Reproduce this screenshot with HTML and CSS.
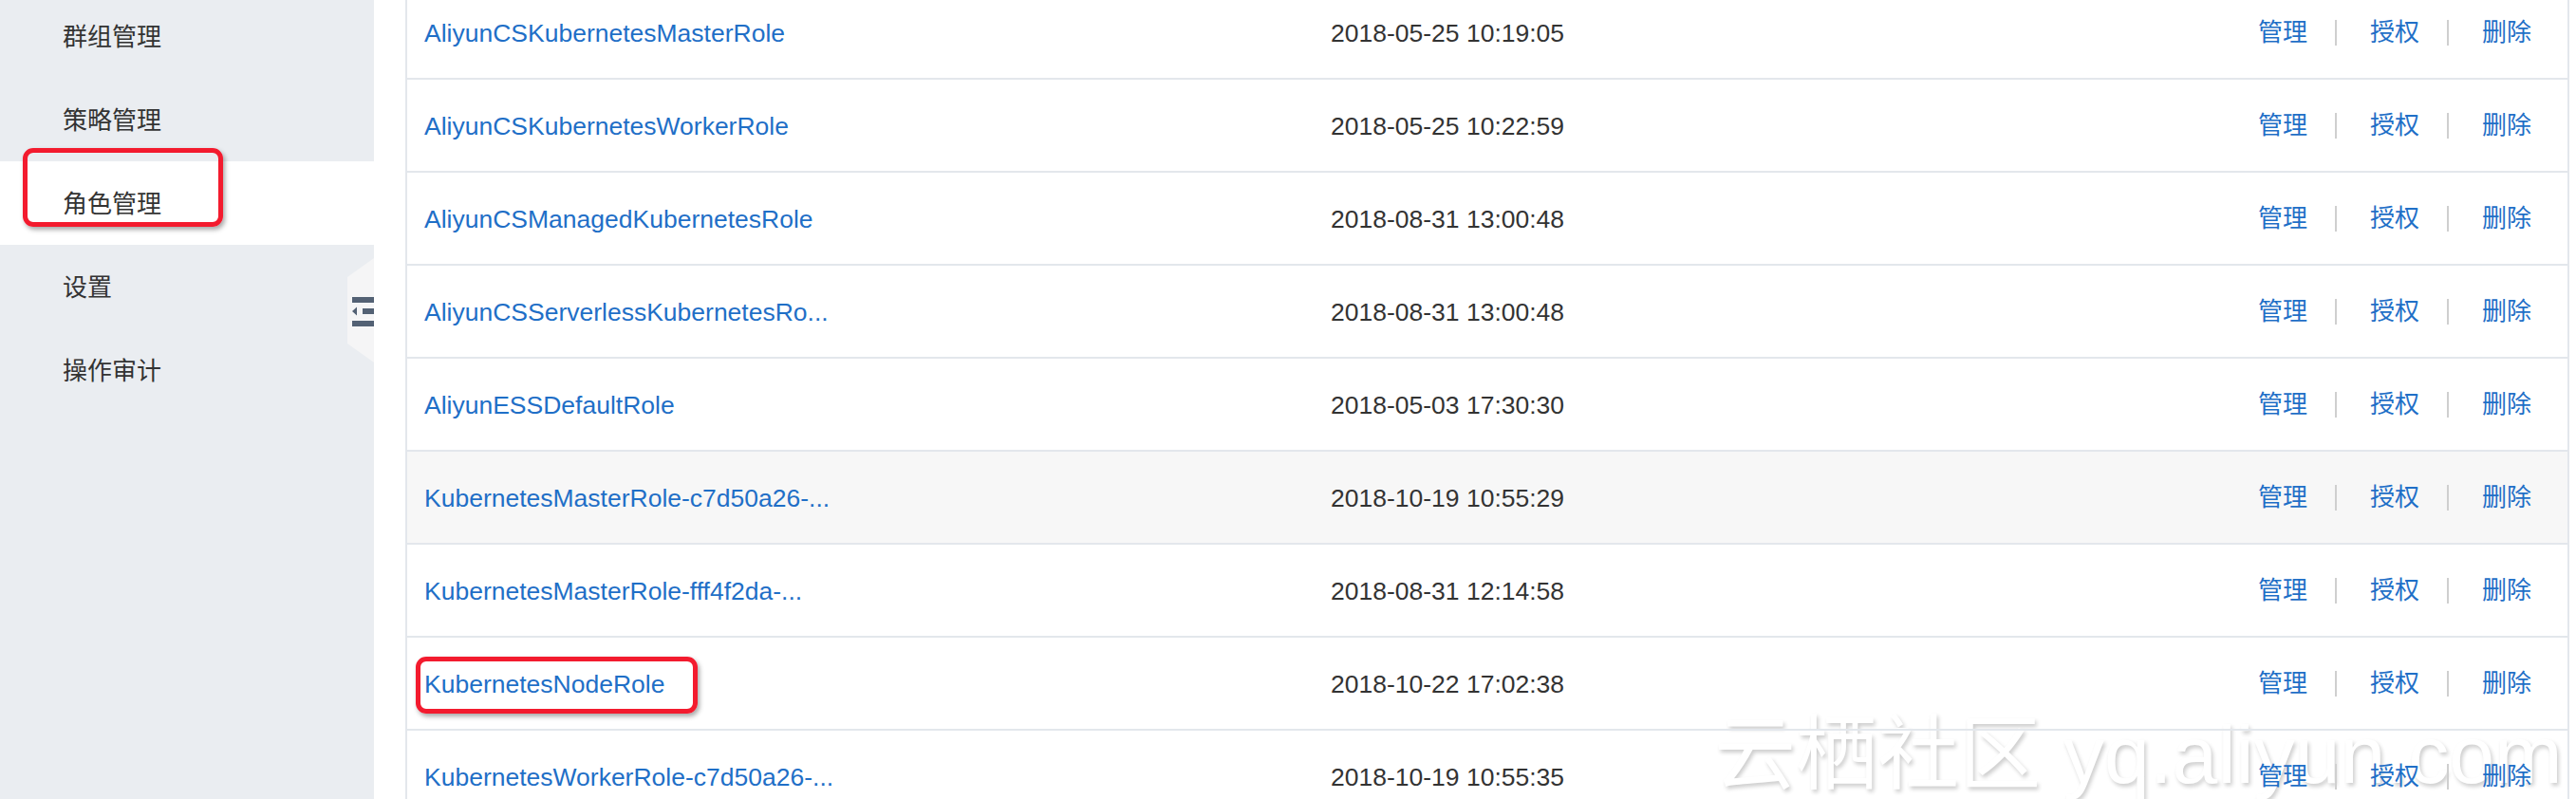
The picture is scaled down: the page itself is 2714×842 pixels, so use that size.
FILE: index.html
```html
<!DOCTYPE html>
<html lang="zh-CN">
<head>
<meta charset="utf-8">
<title>角色管理</title>
<link rel="stylesheet" href="styles.css">
</head>
<body>
<div class="page">
  <aside class="sidebar">
    <ul class="nav">
      <li class="nav-item">群组管理</li>
      <li class="nav-item">策略管理</li>
      <li class="nav-item active">角色管理<span class="mark mark-nav"></span></li>
      <li class="nav-item">设置</li>
      <li class="nav-item">操作审计</li>
    </ul>
    <div class="toggle">
      <svg class="toggle-icon" width="23" height="31" viewBox="0 0 23 31">
        <rect x="0" y="0" width="23" height="6" fill="#536174"/>
        <polygon points="0,15 5,10.5 5,19.5" fill="#536174"/>
        <rect x="11" y="12" width="12" height="6" fill="#536174"/>
        <rect x="0" y="25" width="23" height="6" fill="#536174"/>
      </svg>
    </div>
  </aside>
  <main class="main">
    <div class="table">
      <div class="row"><div class="cell name"><a>AliyunCSKubernetesMasterRole</a></div><div class="cell date">2018-05-25 10:19:05</div><div class="cell ops"><a>管理</a><i class="sep"></i><a>授权</a><i class="sep"></i><a>删除</a></div></div>
      <div class="row"><div class="cell name"><a>AliyunCSKubernetesWorkerRole</a></div><div class="cell date">2018-05-25 10:22:59</div><div class="cell ops"><a>管理</a><i class="sep"></i><a>授权</a><i class="sep"></i><a>删除</a></div></div>
      <div class="row"><div class="cell name"><a>AliyunCSManagedKubernetesRole</a></div><div class="cell date">2018-08-31 13:00:48</div><div class="cell ops"><a>管理</a><i class="sep"></i><a>授权</a><i class="sep"></i><a>删除</a></div></div>
      <div class="row"><div class="cell name"><a>AliyunCSServerlessKubernetesRo...</a></div><div class="cell date">2018-08-31 13:00:48</div><div class="cell ops"><a>管理</a><i class="sep"></i><a>授权</a><i class="sep"></i><a>删除</a></div></div>
      <div class="row"><div class="cell name"><a>AliyunESSDefaultRole</a></div><div class="cell date">2018-05-03 17:30:30</div><div class="cell ops"><a>管理</a><i class="sep"></i><a>授权</a><i class="sep"></i><a>删除</a></div></div>
      <div class="row hover"><div class="cell name"><a>KubernetesMasterRole-c7d50a26-...</a></div><div class="cell date">2018-10-19 10:55:29</div><div class="cell ops"><a>管理</a><i class="sep"></i><a>授权</a><i class="sep"></i><a>删除</a></div></div>
      <div class="row"><div class="cell name"><a>KubernetesMasterRole-fff4f2da-...</a></div><div class="cell date">2018-08-31 12:14:58</div><div class="cell ops"><a>管理</a><i class="sep"></i><a>授权</a><i class="sep"></i><a>删除</a></div></div>
      <div class="row"><div class="cell name"><a>KubernetesNodeRole</a><span class="mark mark-row"></span></div><div class="cell date">2018-10-22 17:02:38</div><div class="cell ops"><a>管理</a><i class="sep"></i><a>授权</a><i class="sep"></i><a>删除</a></div></div>
      <div class="row"><div class="cell name"><a>KubernetesWorkerRole-c7d50a26-...</a></div><div class="cell date">2018-10-19 10:55:35</div><div class="cell ops"><a>管理</a><i class="sep"></i><a>授权</a><i class="sep"></i><a>删除</a></div></div>
    </div>
  </main>
  <div class="watermark">云栖社区 yq.aliyun.com</div>
</div>
</body>
</html>
```

FILE: styles.css
```css
* { box-sizing: border-box; }
html, body { margin: 0; padding: 0; background: #fff; }
body {
  font-family: "Liberation Sans", Arial, "Noto Sans CJK SC", sans-serif;
  color: #333;
}
.page {
  position: relative;
  display: flex;
  width: 2714px;
  height: 842px;
  overflow: hidden;
}

/* sidebar */
.sidebar {
  position: relative;
  z-index: 2;
  flex: 0 0 394px;
  background: #eaedf1;
}
.nav {
  list-style: none;
  margin: -6px 0 0 0;
  padding: 0;
}
.nav-item {
  position: relative;
  height: 88px;
  display: flex;
  align-items: center;
  padding: 0 0 4px 66px;
  font-family: "Noto Sans CJK SC", sans-serif;
  font-size: 26px;
  color: #333;
}
.nav-item.active { background: #fff; }

.toggle {
  position: absolute;
  right: 0;
  top: 272px;
  width: 28px;
  height: 110px;
  background: #f5f5f6;
  clip-path: polygon(0 20px, 100% 0, 100% 100%, 0 90px);
  display: flex;
  align-items: center;
  justify-content: flex-end;
}
.toggle-icon { display: block; margin-top: 2px; }

/* annotation marks */
.mark {
  position: absolute;
  border: 5px solid #f31b2e;
  border-radius: 11px;
  box-shadow: 2px 3px 5px rgba(0, 0, 0, 0.35);
  pointer-events: none;
}
.mark-nav { left: 24px; top: -14px; width: 211px; height: 83px; }
.mark-row { left: 9px; top: 20px; width: 297px; height: 60px; }

/* main table */
.main {
  position: relative;
  z-index: 1;
  flex: 1;
  padding: 0 7px 0 33px;
}
.table {
  margin-top: -14px;
  border-left: 2px solid #e3e7ec;
  border-right: 2px solid #e3e7ec;
}
.row {
  display: grid;
  grid-template-columns: 973px 1fr auto;
  height: 98px;
  border-bottom: 2px solid #e3e7ec;
  align-items: center;
}
.row.hover { background: #f7f7f7; }
.cell { position: relative; height: 100%; display: flex; align-items: center; }
.name { padding: 2px 0 0 18px; font-size: 26.5px; }
.name a { color: #1f6fc7; }
.date { padding-top: 2px; font-size: 26.5px; color: #333; }
.ops {
  padding: 0 38px 5px 0;
  font-family: "Noto Sans CJK SC", sans-serif;
  font-size: 26px;
}
.ops a { color: #1f6fc7; }
.sep {
  display: block;
  width: 2px;
  height: 27px;
  background: #cfcfcf;
  margin: 5px 35px 0 29px;
}

/* watermark, drawn beneath the transparent table */
.watermark {
  position: absolute;
  z-index: 0;
  left: 1806px;
  top: 752px;
  font-family: "Liberation Sans", "Noto Sans CJK SC", sans-serif;
  font-size: 86px;
  line-height: 1;
  color: #ffffff;
  text-shadow: 2px 3px 4px rgba(0, 0, 0, 0.2);
  white-space: nowrap;
  pointer-events: none;
}
```
